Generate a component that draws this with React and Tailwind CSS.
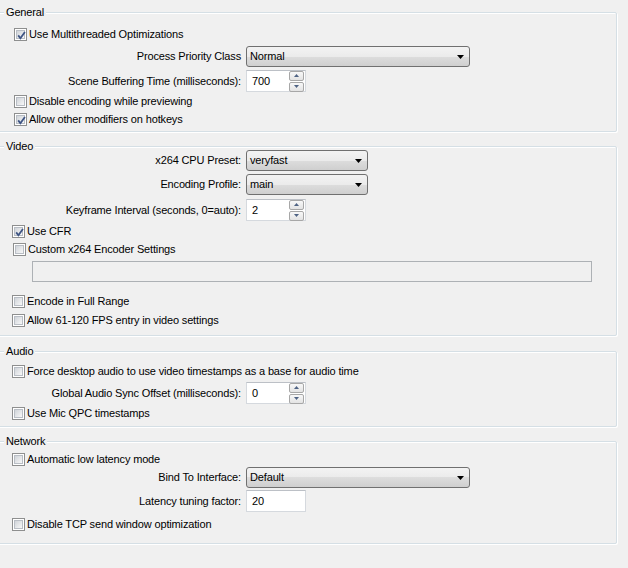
import React from 'react';

// Win7-style checkbox box, with an optional blue check mark
function Check({ checked }) {
  return (
    <span className="relative flex h-[13px] w-[13px] shrink-0 border border-[#8e8f8f] bg-white p-px">
      <span className="h-full w-full border border-[#b9bec5] bg-gradient-to-br from-[#d0d4d9] to-[#f8f8f8]" />
      {checked && (
        <svg className="absolute inset-0" width="13" height="13" viewBox="0 0 13 13">
          <path d="M3.2 6.4 L5.4 9.2 L9.9 2.9" fill="none" stroke="#3f5584" strokeWidth="1.8" />
        </svg>
      )}
    </span>
  );
}

function CheckRow({ checked, label, className = 'h-[18px] pl-[13px]' }) {
  return (
    <div className={`flex items-center gap-[2px] ${className}`}>
      <Check checked={checked} />
      <span className="whitespace-nowrap">{label}</span>
    </div>
  );
}

function FormRow({ label, className = '', children }) {
  return (
    <div className={`flex items-center ${className}`}>
      <div className="w-[241px] shrink-0 whitespace-nowrap text-right">{label}</div>
      <div className="ml-[5px]">{children}</div>
    </div>
  );
}

function Combo({ value, className }) {
  return (
    <div
      className={`flex h-[21px] items-center rounded-[3px] border border-[#707070] bg-[linear-gradient(#f3f3f3,#ebebeb_50%,#dddddd_50%,#cfcfcf)] pl-[3px] pr-[5px] ${className}`}
    >
      <span className="flex-1">{value}</span>
      <svg width="7" height="4" viewBox="0 0 7 4">
        <polygon points="0,0 7,0 3.5,4" fill="#000" />
      </svg>
    </div>
  );
}

function SpinButton({ up }) {
  return (
    <span className="flex h-[10px] w-[15px] items-center justify-center rounded-[2px] border border-[#a7a7a7] bg-gradient-to-b from-[#f8f8f8] to-[#e3e3e3]">
      <svg width="5" height="3" viewBox="0 0 5 3">
        <polygon points={up ? '0,3 5,3 2.5,0' : '0,0 5,0 2.5,3'} fill="#4f6384" />
      </svg>
    </span>
  );
}

function TextBox({ value, spin }) {
  return (
    <div className="flex h-[22px] w-[60px] items-center border border-[#d5d9de] border-t-[#bcc0c6] bg-white">
      <span className="flex-1 pl-[5px] leading-none">{value}</span>
      {spin && (
        <div className="mr-px flex flex-col gap-px">
          <SpinButton up />
          <SpinButton />
        </div>
      )}
    </div>
  );
}

function Group({ title, className = '', children }) {
  return (
    <fieldset
      className={`-ml-[3px] w-[620px] rounded-[2px] border border-[#d5dfe5] pl-[2px] shadow-[1px_1px_0_#fff,inset_1px_1px_0_#fff] ${className}`}
    >
      <legend className="ml-[4px] h-[8px] bg-[#f0f0f0] px-[2px] leading-[8px]">{title}</legend>
      {children}
    </fieldset>
  );
}

export default function App() {
  return (
    <div className="h-[568px] w-[628px] overflow-hidden bg-[#f0f0f0] pt-[8px] font-['Liberation_Sans',Arial,sans-serif] text-[11px] tracking-[-0.15px] text-black">
      <Group title="General" className="pb-[3px]">
        <CheckRow checked label="Use Multithreaded Optimizations" className="mt-[9px] h-[18px] pl-[14px]" />
        <FormRow label="Process Priority Class" className="mt-[3px]">
          <Combo value="Normal" className="w-[224px]" />
        </FormRow>
        <FormRow label="Scene Buffering Time (milliseconds):" className="mt-[3px]">
          <TextBox value="700" spin />
        </FormRow>
        <CheckRow label="Disable encoding while previewing" className="h-[18px] pl-[14px]" />
        <CheckRow checked label="Allow other modifiers on hotkeys" className="h-[18px] pl-[14px]" />
      </Group>

      <Group title="Video" className="mt-[10px] pb-[6px]">
        <FormRow label="x264 CPU Preset:">
          <Combo value="veryfast" className="w-[122px]" />
        </FormRow>
        <FormRow label="Encoding Profile:" className="mt-[3px]">
          <Combo value="main" className="w-[122px]" />
        </FormRow>
        <FormRow label="Keyframe Interval (seconds, 0=auto):" className="mt-[4px]">
          <TextBox value="2" spin />
        </FormRow>
        <CheckRow checked label="Use CFR" className="mt-px h-[18px] pl-[12px]" />
        <CheckRow label="Custom x264 Encoder Settings" />
        <div className="ml-[32px] mt-[3px] h-[21px] w-[560px] border border-[#adb1b5] bg-[#f0f0f0]" />
        <CheckRow label="Encode in Full Range" className="mt-[10px] h-[18px] pl-[12px]" />
        <CheckRow label="Allow 61-120 FPS entry in video settings" className="mt-px h-[18px] pl-[12px]" />
      </Group>

      <Group title="Audio" className="mt-[11px] pb-[4px]">
        <CheckRow
          label="Force desktop audio to use video timestamps as a base for audio time"
          className="mt-[7px] h-[18px] pl-[12px]"
        />
        <FormRow label="Global Audio Sync Offset (milliseconds):" className="mt-[2px]">
          <TextBox value="0" spin />
        </FormRow>
        <CheckRow label="Use Mic QPC timestamps" className="h-[18px] pl-[12px]" />
      </Group>

      <Group title="Network" className="mt-[10px] pb-[10px]">
        <CheckRow label="Automatic low latency mode" className="mt-[6px] h-[16px] pl-[12px]" />
        <FormRow label="Bind To Interface:">
          <Combo value="Default" className="w-[224px]" />
        </FormRow>
        <FormRow label="Latency tuning factor:" className="mt-[2px]">
          <TextBox value="20" />
        </FormRow>
        <CheckRow label="Disable TCP send window optimization" className="mt-[3px] h-[18px] pl-[12px]" />
      </Group>
    </div>
  );
}
